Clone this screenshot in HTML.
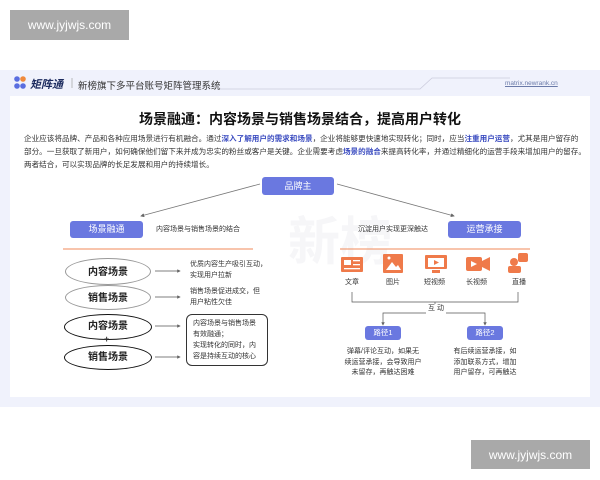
<!DOCTYPE html>
<html><head><meta charset="utf-8"><style>
*{margin:0;padding:0;box-sizing:border-box}
body{width:600px;height:480px;background:#fff;position:relative;overflow:hidden;font-family:"Liberation Sans","Noto Sans CJK SC",sans-serif;color:#333}
.a{position:absolute;white-space:nowrap}
.wm{background:#a9a9a9;color:#fff;font-size:12px;text-align:center;line-height:30px}
.btn{position:absolute;background:#6a78e0;color:#fff;border-radius:3px;text-align:center;font-size:9px}
.el{position:absolute;border-radius:50%;text-align:center;font-weight:bold;font-size:10px;color:#222}
.t{position:absolute;font-size:7px;line-height:10.5px;color:#333;white-space:nowrap}
</style></head><body>
<div class="a wm" style="left:10px;top:10px;width:119px;height:30px">www.jyjwjs.com</div>
<div class="a wm" style="left:471px;top:440px;width:119px;height:29px">www.jyjwjs.com</div>
<div class="a" style="left:0;top:70px;width:600px;height:337px;background:#f0f2fc"></div>
<div class="a" style="left:10px;top:96px;width:580px;height:301px;background:#fff"></div>
<svg class="a" style="left:0;top:70px" width="600" height="30">
<circle cx="17" cy="9" r="2.8" fill="#5a6ee0"/><circle cx="23" cy="9" r="2.8" fill="#f08a3c"/><circle cx="17" cy="16" r="2.8" fill="#5a6ee0"/><circle cx="23" cy="16" r="2.8" fill="#5a6ee0"/>
<line x1="72" y1="8" x2="72" y2="18" stroke="#aaa" stroke-width="0.8"/>
<polyline points="220,19 420,19 432,8 510,8" fill="none" stroke="#ccd" stroke-width="0.8"/>
</svg>
<div class="a" style="left:30px;top:76px;font-size:11px;font-weight:bold;font-style:italic;color:#1b2a5e">矩阵通</div>
<div class="a" style="left:78px;top:78px;font-size:9.5px;color:#333">新榜旗下多平台账号矩阵管理系统</div>
<div class="a" style="left:505px;top:80px;font-size:6.5px;color:#6a7aa8;text-decoration:underline">matrix.newrank.cn</div>
<div class="a" style="left:0;width:600px;top:109px;text-align:center;font-size:14px;font-weight:bold;color:#111">场景融通：内容场景与销售场景结合，提高用户转化</div>
<div class="t" style="left:24px;top:132px;font-size:7.6px;line-height:13px">企业应该将品牌、产品和各种应用场景进行有机融合。通过<b style="color:#3b4cc0">深入了解用户的需求和场景</b>，企业将能够更快速地实现转化；同时，应当<b style="color:#3b4cc0">注重用户运营</b>，尤其是用户留存的<br>部分。一旦获取了新用户，如何确保他们留下来并成为忠实的粉丝或客户是关键。企业需要考虑<b style="color:#3b4cc0">场景的融合</b>来提高转化率，并通过精细化的运营手段来增加用户的留存。<br>两者结合，可以实现品牌的长足发展和用户的持续增长。</div>
<div class="a" style="left:288px;top:200px;font-size:52px;font-weight:bold;color:#f6f6f8">新榜</div>
<div class="btn" style="left:262px;top:177px;width:72px;height:18px;line-height:18px">品牌主</div>
<div class="btn" style="left:70px;top:221px;width:73px;height:17px;line-height:17px">场景融通</div>
<div class="btn" style="left:448px;top:221px;width:73px;height:17px;line-height:17px">运营承接</div>
<div class="t" style="left:156px;top:225px">内容场景与销售场景的结合</div>
<div class="t" style="left:358px;top:225px">沉淀用户实现更深触达</div>
<svg class="a" style="left:0;top:0" width="600" height="480">
<defs><marker id="m" markerWidth="5" markerHeight="5" refX="4" refY="2.5" orient="auto"><path d="M0,0L5,2.5L0,5z" fill="#666"/></marker></defs>
<line x1="260" y1="184" x2="141" y2="216" stroke="#777" stroke-width="0.8" marker-end="url(#m)"/>
<line x1="337" y1="184" x2="454" y2="216" stroke="#777" stroke-width="0.8" marker-end="url(#m)"/>
<line x1="63" y1="249" x2="253" y2="249" stroke="#f08a5a" stroke-width="1"/>
<line x1="340" y1="249" x2="530" y2="249" stroke="#f08a5a" stroke-width="1"/>
<g stroke="#555" stroke-width="0.7" marker-end="url(#m)">
<line x1="155" y1="271" x2="180" y2="271"/><line x1="155" y1="297" x2="180" y2="297"/>
<line x1="155" y1="326" x2="180" y2="326"/><line x1="155" y1="357" x2="180" y2="357"/>
<polyline fill="none" points="435,313 383,313 383,325"/><polyline fill="none" points="435,313 485,313 485,325"/>
</g>
<polyline fill="none" stroke="#555" stroke-width="0.7" points="352,292 352,302 518,302 518,292"/>
<line x1="435" y1="302" x2="435" y2="313" stroke="#555" stroke-width="0.7"/>
<g fill="#ef7a4a">
<rect x="341" y="257" width="22" height="15" rx="1"/><rect x="383" y="254" width="20" height="19" rx="1"/>
<rect x="425" y="255" width="22" height="14" rx="1"/><rect x="432" y="270" width="8" height="3"/>
<rect x="466" y="257" width="16" height="14" rx="2"/><path d="M482,261L490,257V271L482,267z"/>
<circle cx="514" cy="262" r="4"/><rect x="508" y="266" width="13" height="7" rx="2"/><rect x="518" y="253" width="10" height="9" rx="2"/>
</g>
<g fill="#fff"><rect x="344" y="260" width="7" height="5"/><rect x="353" y="260" width="7" height="1.3"/><rect x="353" y="264" width="7" height="1.3"/><rect x="344" y="268" width="16" height="1.3"/>
<path d="M386,270L392,262L396,267L398,265L401,270z"/><circle cx="389" cy="258" r="1.5"/>
<rect x="428" y="258" width="16" height="9"/><path d="M471,261L477,264L471,267z"/></g>
<path d="M434,260L439,262.5L434,265z" fill="#ef7a4a"/>
</svg>
<div class="t" style="left:345px;top:278px">文章</div><div class="t" style="left:386px;top:278px">图片</div>
<div class="t" style="left:424px;top:278px">短视频</div><div class="t" style="left:466px;top:278px">长视频</div><div class="t" style="left:512px;top:278px">直播</div>
<div class="t" style="left:426px;top:304px;background:#fff;padding:0 2px">互 动</div>
<div class="el" style="left:65px;top:258px;width:86px;height:27px;line-height:27px;border:0.8px solid #999">内容场景</div>
<div class="el" style="left:65px;top:285px;width:86px;height:25px;line-height:25px;border:0.8px solid #999">销售场景</div>
<div class="el" style="left:64px;top:314px;width:88px;height:26px;line-height:24px;border:1.5px solid #111">内容场景</div>
<div class="a" style="left:104px;top:334px;font-size:9px;font-weight:bold">+</div>
<div class="el" style="left:64px;top:345px;width:88px;height:25px;line-height:23px;border:1.5px solid #111">销售场景</div>
<div class="t" style="left:190px;top:260px">优质内容生产吸引互动，<br>实现用户拉新</div>
<div class="t" style="left:190px;top:287px">销售场景促进成交，但<br>用户粘性欠佳</div>
<div class="a" style="left:186px;top:314px;width:82px;height:52px;border:0.8px solid #333;border-radius:6px"></div>
<div class="t" style="left:193px;top:318px;line-height:11px">内容场景与销售场景<br>有效融通；<br>实现转化的同时，内<br>容是持续互动的核心</div>
<div class="btn" style="left:365px;top:326px;width:36px;height:14px;line-height:14px;font-size:7.5px">路径1</div>
<div class="btn" style="left:467px;top:326px;width:36px;height:14px;line-height:14px;font-size:7.5px">路径2</div>
<div class="t" style="left:343px;top:347px;width:80px;text-align:center">弹幕/评论互动，如果无<br>续运营承接，会导致用户<br>未留存，再触达困难</div>
<div class="t" style="left:445px;top:347px;width:80px;text-align:center">有后续运营承接，如<br>添加联系方式，增加<br>用户留存，可再触达</div>
</body></html>
